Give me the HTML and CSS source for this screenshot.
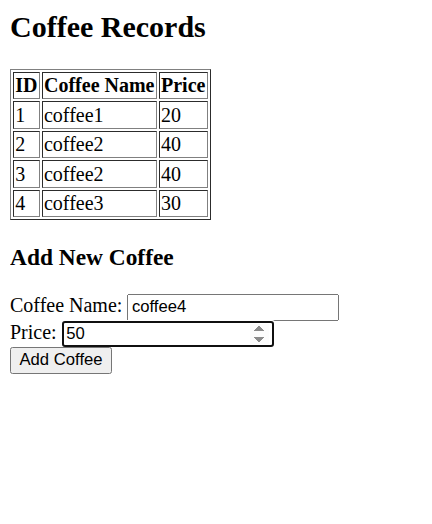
FILE: index.html
```html
<!DOCTYPE html>
<html>
<head>
<meta charset="utf-8">
<title>Coffee Records</title>
<link rel="stylesheet" href="styles.css">
</head>
<body>
<h1 class="title">Coffee Records</h1>
<table class="records">
<tr><th>ID</th><th>Coffee Name</th><th>Price</th></tr>
<tr><td>1</td><td>coffee1</td><td>20</td></tr>
<tr><td>2</td><td>coffee2</td><td>40</td></tr>
<tr><td>3</td><td>coffee2</td><td>40</td></tr>
<tr><td>4</td><td>coffee3</td><td>30</td></tr>
</table>
<h3 class="subtitle">Add New Coffee</h3>
<form class="add-form">
<label for="name">Coffee Name:</label>
<input type="text" id="name" class="field" value="coffee4"><br>
<label for="price">Price:</label>
<input type="number" id="price" class="field" value="50" autofocus><br>
<button type="button" class="submit">Add Coffee</button>
</form>
</body>
</html>
```
FILE: styles.css
```css
html {
  zoom: 1.25;
}
body {
  font-family: "Liberation Serif", "Times New Roman", serif;
  font-size: 16px;
  margin: 8px;
  color: #000;
  background: #fff;
}
.title {
  font-size: 24px;
  margin: 0 0 19.92px;
}
.records {
  border: 1px outset #808080;
  border-spacing: 2px;
}
.records th,
.records td {
  border: 1px inset #808080;
  padding: 1px;
}
.subtitle {
  font-size: 1.17em;
  margin: 1em 0;
}
.field,
.submit {
  font-family: "Liberation Sans", Arial, sans-serif;
  font-size: 13.333px;
}
.field {
  box-sizing: border-box;
  width: 169.6px;
}
```
